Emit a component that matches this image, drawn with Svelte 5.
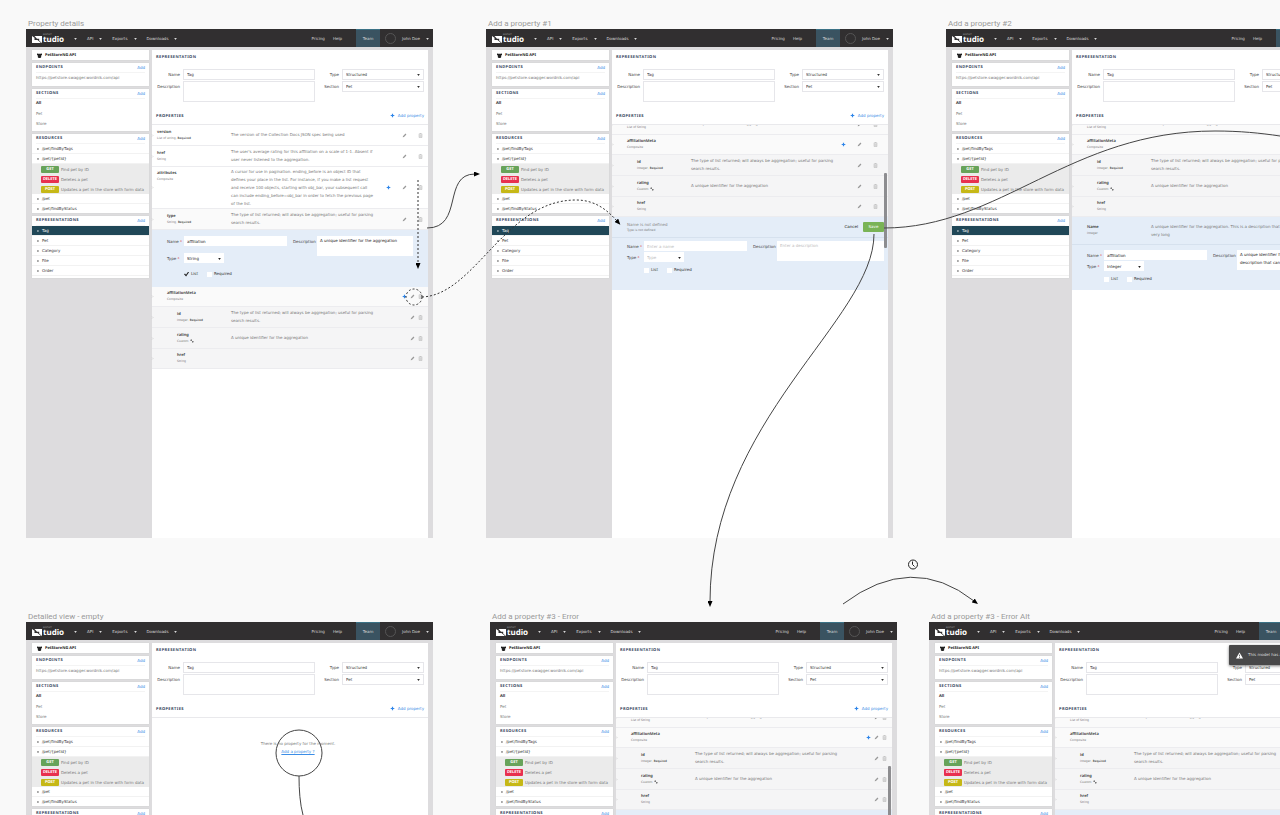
<script>
  const sections = ['All', 'Pet', 'Store'];
  const methods = [
    { verb: 'GET', text: 'Find pet by ID' },
    { verb: 'DELETE', text: 'Deletes a pet' },
    { verb: 'POST', text: 'Updates a pet in the store with form data' }
  ];
  const representations = ['Tag', 'Pet', 'Category', 'File', 'Order'];

  const listText = 'The type of list returned; will always be aggregation; useful for parsing search results.';
  const idText = 'A unique identifier for the aggregation';

  const topRows = [
    { name: 'version', type: 'List of string,', required: true, level: 0, text: 'The version of the Collection Docs JSON spec being used' },
    { name: 'href', type: 'String', level: 0, text: "The user's average rating for this affiliation on a scale of 1-1. Absent if user never listened to the aggregation." },
    { name: 'attributes', type: 'Composite', level: 0, plus: true, tall: true, text: 'A cursor for use in pagination. ending_before is an object ID that defines your place in the list. For instance, if you make a list request and receive 100 objects, starting with obj_bar, your subsequent call can include ending_before=obj_bar in order to fetch the previous page of the list.' },
    { name: 'type', type: 'String,', required: true, level: 1, shade: 1, text: listText }
  ];
  const metaRows = [
    { name: 'affiliationMeta', type: 'Composite', level: 1, shade: 1, plus: true, group: true },
    { name: 'id', type: 'Integer,', required: true, level: 2, shade: 2, text: listText },
    { name: 'rating', type: 'Custom', linked: true, level: 2, shade: 2, text: idText },
    { name: 'href', type: 'String', level: 2, shade: 2, group: true }
  ];
  const cutRow = { type: 'List of String', level: 1, shade: 1, text: idText };

  const boards = [
    { title: 'Property details', x: 26, y: 18, kind: 'details' },
    { title: 'Add a property #1', x: 486, y: 18, kind: 'new' },
    { title: 'Add a property #2', x: 946, y: 18, kind: 'filled' },
    { title: 'Detailed view - empty', x: 26, y: 611, kind: 'empty' },
    { title: 'Add a property #3 - Error', x: 490, y: 611, kind: 'error' },
    { title: 'Add a property #3 - Error Alt', x: 929, y: 611, kind: 'alert' }
  ];
</script>

{#snippet caret()}
  <svg class="caret" viewBox="0 0 4 3" aria-hidden="true"><path d="M0 0h4L2 3z" /></svg>
{/snippet}

{#snippet arrow(open)}
  <svg class="arrow" class:open viewBox="0 0 4 4" aria-hidden="true"><path d="M1 0l3 2-3 2z" /></svg>
{/snippet}

{#snippet plusIcon()}
  <svg class="ic plus" viewBox="0 0 5 5" aria-hidden="true"><path d="M2.5 0.7v3.6M0.7 2.5h3.6" /></svg>
{/snippet}

{#snippet head(title)}
  <div class="card-head"><h3>{title}</h3><a href="#add">Add</a></div>
{/snippet}

{#snippet row(r, tools)}
  <li class="row shade{r.shade ?? 0} level{r.level}" class:tall={r.tall} class:group={r.group} class:partial={!r.name}>
    <svg class="grip" viewBox="0 0 2 4" aria-hidden="true"><path d="M0 0l2 2-2 2" /></svg>
    <div class="id">
      {#if r.name}<strong>{r.name}</strong>{/if}
      <small>
        {r.type}
        {#if r.required}<b>Required</b>{/if}
        {#if r.linked}<svg class="link" viewBox="0 0 5 5" aria-hidden="true"><path d="M1 1l3 3M0.5 2l1.5-1.5M3 4.5L4.5 3" /></svg>{/if}
      </small>
    </div>
    <p>{r.text ?? ''}</p>
    <div class="tools {tools}">
      {#if r.plus}<button aria-label="Add child">{@render plusIcon()}</button>{/if}
      <button aria-label="Edit">
        <svg class="ic" viewBox="0 0 5 5" aria-hidden="true"><path class="pencil" d="M0.7 4.3l0.4-1.4L3.5 0.6l0.9 0.9L2 3.9z" /></svg>
      </button>
      <button aria-label="Delete">
        <svg class="ic" viewBox="0 0 5 5" aria-hidden="true"><path class="bin" d="M0.7 1.2h3.6M1.8 1V0.5h1.4V1M1.1 1.5v3h2.8v-3M2 2v2M3 2v2" /></svg>
      </button>
    </div>
  </li>
{/snippet}

{#snippet form(kind, value, type, text)}
  <div class="edit {kind}">
    <div class="fields">
      <label class="field"><span>Name <i>*</i></span><input type="text" {value} placeholder="Enter a name" /></label>
      <label class="field type">
        <span>Type <i>*</i></span>
        <span class="pick"><select class:ghost={type === 'Type'}><option>{type}</option></select>{@render caret()}</span>
      </label>
      <div class="checks">
        <label><input type="checkbox" checked={kind === 'details'} />List</label>
        <label><input type="checkbox" />Required</label>
      </div>
    </div>
    <label class="about"><span>Description</span><textarea value={text} placeholder="Enter a description"></textarea></label>
  </div>
{/snippet}

<main class="canvas">
  {#each boards as b}
    <figure class="board" style:left="{b.x}px" style:top="{b.y}px">
      <figcaption>{b.title}</figcaption>
      <div class="window">
        <header>
          <div class="logo">
            <svg viewBox="0 0 10 7" aria-hidden="true">
              <path d="M0 0l2.500 1.800v2.200H5.500L9 7H0zM2.500 0H10v7L7.200 4.800V2.800H5z" />
            </svg>
            <div><small>RESTLET</small><b>tudio</b></div>
          </div>
          <nav>
            <a href="#menu" aria-label="Menu">{@render caret()}</a>
            <a href="#api">API {@render caret()}</a>
            <a href="#exports">Exports {@render caret()}</a>
            <a href="#downloads">Downloads {@render caret()}</a>
          </nav>
          <nav class="help"><a href="#pricing">Pricing</a><a href="#help">Help</a></nav>
          <a class="team" href="#team">Team</a>
          <a class="user" href="#user"><span class="avatar"></span>John Doe {@render caret()}</a>
        </header>

        <div class="body">
          <aside>
            <div class="card api">
              <svg viewBox="0 0 6 6" aria-hidden="true"><path d="M0 0.500l1.500 0.500h3L6 0.500V2.500L5 3v2L4 6H2L1 5V3L0 2.500z" /></svg>
              <b>PetStoreNG API</b>
            </div>
            <div class="card endpoints">
              {@render head('ENDPOINTS')}
              <p>https://petstore.swagger.wordnik.com/api</p>
            </div>
            <div class="card sections">
              {@render head('SECTIONS')}
              <ul>{#each sections as s, i}<li class:current={i === 0}>{s}</li>{/each}</ul>
            </div>
            <div class="card resources">
              {@render head('RESOURCES')}
              <ul class="tree">
                <li>{@render arrow(false)}/pet/findByTags</li>
                <li>{@render arrow(true)}/pet/&#123;petId&#125;</li>
              </ul>
              <ul class="methods">
                {#each methods as m}<li><span class="verb {m.verb.toLowerCase()}">{m.verb}</span>{m.text}</li>{/each}
              </ul>
              <ul class="tree">
                <li>{@render arrow(false)}/pet</li>
                <li>{@render arrow(false)}/pet/findByStatus</li>
              </ul>
            </div>
            <div class="card reps">
              {@render head('REPRESENTATIONS')}
              <ul class="tree">
                {#each representations as r, i}<li class:selected={i === 0}>{@render arrow(false)}{r}</li>{/each}
              </ul>
            </div>
          </aside>

          <section class="content">
            <h3>REPRESENTATION</h3>
            <div class="summary">
              <div class="left">
                <label><span>Name</span><input type="text" value="Tag" /></label>
                <label><span>Description</span><textarea></textarea></label>
              </div>
              <div class="right">
                <label><span>Type</span><span class="pick"><select><option>Structured</option></select>{@render caret()}</span></label>
                <label><span>Section</span><span class="pick"><select><option>Pet</option></select>{@render caret()}</span></label>
              </div>
            </div>
            <div class="props-head">
              <h3>PROPERTIES</h3>
              <button>{@render plusIcon()} Add property</button>
            </div>

            {#if b.kind === 'empty'}
              <div class="empty">
                <p>There is no property for the moment.</p>
                <a href="#new">Add a property ?</a>
              </div>
            {:else if b.kind === 'details'}
              <ul class="rows">
                {#each topRows as r}{@render row(r, 'wide')}{/each}
                <li class="panel">{@render form('details', 'affiliation', 'String', idText)}</li>
                {#each metaRows as r}{@render row(r, 'tight')}{/each}
              </ul>
            {:else}
              {@const tools = b.kind === 'error' ? 'tight' : 'inset'}
              <div class="scroller">
                <ul class="rows">
                  {@render row(cutRow, tools)}
                  {#each metaRows as r}{@render row(r, tools)}{/each}
                  <li class="panel">
                    {#if b.kind === 'filled'}
                      <div class="panel-head filled">
                        <div class="id"><strong>Name</strong><small>Integer</small></div>
                        <p>A unique identifier for the aggregation. This is a description that can be very long</p>
                      </div>
                      {@render form('filled', 'affiliation', 'Integer', 'A unique identifier for the aggregation. This is a description that can be very long')}
                    {:else}
                      <div class="panel-head">
                        <div class="id undefined"><span>Name is not defined</span><small>Type is not defined</small></div>
                        <div class="actions"><button>Cancel</button><button class="save">Save</button></div>
                      </div>
                      {@render form('new', '', 'Type', '')}
                    {/if}
                  </li>
                </ul>
                {#if b.kind !== 'filled'}<span class="thumb"></span>{/if}
              </div>
            {/if}
          </section>
        </div>

        {#if b.kind === 'alert'}
          <div class="toast" role="alert">
            <svg viewBox="0 0 8 7" aria-hidden="true"><path d="M4 0l4 7H0z" fill="#fff" /><path d="M4 2.500v2M4 5.300v0.900" stroke="#444" stroke-width="0.900" /></svg>
            This model has an error
          </div>
        {/if}
      </div>
    </figure>
  {/each}

  <svg class="links" width="1280" height="815" viewBox="0 0 1280 815" aria-hidden="true">
    <defs>
      <marker id="tip" viewBox="0 0 6 5" refX="1" refY="2.500" markerWidth="6" markerHeight="5" markerUnits="userSpaceOnUse" orient="auto">
        <path d="M0 0l6 2.500L0 5z" />
      </marker>
    </defs>
    <path d="M427 228C464 228 442 174 475 174" marker-end="url(#tip)" />
    <path class="dots" d="M418 180V264" marker-end="url(#tip)" />
    <circle class="dots" cx="414" cy="297" r="8" />
    <path class="dots" d="M422 297C475 295 505 200 576 200C596 200 608 211 617 221" marker-end="url(#tip)" />
    <path d="M874 234C874 320 710 420 710 602" marker-end="url(#tip)" />
    <path d="M884 228C1000 228 1070 131 1215 131C1240 131 1260 133 1280 136" />
    <path d="M843 604Q912 552 974 601" marker-end="url(#tip)" />
    <circle cx="299" cy="753" r="23" />
    <path d="M299 776C299 790 300 804 303 815" />
    <g class="clock"><circle cx="913" cy="564.500" r="4.500" /><path d="M912.500 561.500v3l2 2" /></g>
  </svg>
</main>

<style>
  :global(body) { margin: 0; background: #f9f9f9; }
  .canvas { position: relative; height: 100vh; overflow: hidden; background: #f9f9f9; font: 4px/8px "DejaVu Sans", "Noto Sans", sans-serif; text-rendering: geometricPrecision; color: #444; }
  .canvas :is(p, ul, h3, figure) { margin: 0; padding: 0; }
  .canvas ul { list-style: none; }
  .canvas a { color: #3b8de6; text-decoration: none; }
  .canvas :is(button, input, select, textarea) { box-sizing: border-box; margin: 0; padding: 0; border: 0; border-radius: 0; background: none; font: inherit; text-rendering: inherit; color: inherit; }
  svg { display: block; flex: none; overflow: visible; }
  h3, b, strong, .current, .verb { font-family: "Noto Sans", sans-serif; }
  h3 { font-size: 4px; font-weight: 700; letter-spacing: 0.1em; color: #34435c; }

  .board { position: absolute; width: 407px; margin: 0; }
  figcaption { padding-top: 1px; margin: 0 0 0 2px; font: 8px/10px Roboto, sans-serif; text-rendering: auto; color: #999; }
  .window { position: relative; display: flex; flex-direction: column; min-height: 509px; overflow: hidden; background: #dddcde; }

  header { display: flex; align-items: center; box-sizing: border-box; height: 18px; padding: 1px 4px 0 6px; background: #312f30; color: #d8d8d8; }
  header a { display: flex; align-items: center; gap: 6px; color: #d8d8d8 !important; }
  .logo { display: flex; align-items: flex-end; gap: 1px; width: 42px; color: #fff; }
  .logo svg { width: 10px; height: 7px; fill: #fff; }
  .logo div { display: flex; flex-direction: column; }
  .logo small { font-size: 2px; line-height: 2px; color: #aaa; }
  .logo b { font-size: 8px; line-height: 7px; }
  nav { display: flex; gap: 10px; }
  .caret { width: 3px; height: 2px; fill: currentColor; }
  .help { gap: 8px; margin-left: auto; margin-right: 14px; }
  .team { align-self: stretch; justify-content: center; width: 24px; margin-top: -1px; box-sizing: border-box; border-top: 1px solid #3b7286; background: #3a5361; }
  .user { margin-left: 5px; }
  .avatar { width: 9px; height: 9px; border: 1px solid #555; border-radius: 50%; }

  .body { display: flex; flex: 1; gap: 3px; padding: 3px 5px 0 6px; }
  aside { display: flex; flex-direction: column; gap: 3px; width: 117px; }
  .card { box-sizing: border-box; background: #fff; box-shadow: 0 0 1px #c8c8c8; }
  .api { display: flex; align-items: center; gap: 3px; height: 10px; padding: 1px 5px 0; color: #222; }
  .api svg { width: 5px; height: 5px; fill: #222; }
  .card-head { display: flex; justify-content: space-between; align-items: center; box-sizing: border-box; height: 10px; margin: 0 4px; padding-top: 1px; border-bottom: 1px solid #f4f4f4; }
  .card-head a { font-size: 4px; }
  .endpoints { height: 23px; }
  .endpoints p { padding: 1px 4px 0; color: #777; }
  .sections { height: 42px; }
  .sections li { height: 10px; line-height: 10px; padding: 0 4px; color: #777; }
  .sections .current { color: #222; font-weight: 700; }
  .resources { height: 79px; overflow: hidden; }
  .tree li { display: flex; align-items: center; gap: 1px; box-sizing: border-box; height: 10px; padding: 1px 5px 0; border-bottom: 1px solid #f2f2f2; color: #333; }
  .arrow { width: 2px; height: 2px; margin-right: 2px; fill: #333; }
  .arrow.open { transform: rotate(90deg); }
  .methods { background: #ebebeb; padding-bottom: 1px; }
  .methods li { display: flex; align-items: center; gap: 2px; height: 10px; padding: 1px 0 0 9px; box-sizing: border-box; color: #777; }
  .verb { width: 18px; height: 7px; border-radius: 1px; font-weight: 700; line-height: 8px; text-align: center; color: #fff; }
  .get { background: #67a35a; }
  .delete { background: #e8304f; }
  .post { background: #c6b816; }
  .reps { padding-bottom: 2px; }
  .reps .selected { background: #204757; color: #fff; }
  .reps .selected svg { fill: #fff; }

  .content { position: relative; flex: 1; min-width: 0; background: #fff; }
  .content > h3 { padding: 1px 4px 0; line-height: 14px; }
  .summary { display: flex; gap: 3px; padding: 4px 4px 0; }
  .summary > div { display: flex; flex-direction: column; }
  .left { flex: 1; }
  .right { width: 106px; }
  .summary label { display: flex; gap: 3px; line-height: 12px; }
  .summary label > span:first-child { width: 24px; text-align: right; }
  .summary .right label > span:first-child { width: 21px; }
  .summary :is(input, textarea, .pick) { flex: 1; min-width: 0; height: 11px; border: 1px solid #e6e6ea; padding: 1px 3px 0; background: #fff; color: #333; }
  .summary .left textarea { height: 21px; }
  textarea { resize: none; overflow: hidden; }
  .pick { display: flex; align-items: center; box-sizing: border-box; background: #fff; color: #333; }
  .pick select { flex: 1; min-width: 0; appearance: none; }
  .props-head { display: flex; justify-content: space-between; height: 15px; margin-top: 7px; padding: 0 4px; border-bottom: 1px solid #e9e9ec; line-height: 16px; }
  .props-head button { display: flex; align-items: center; gap: 3px; height: 13px; color: #3b8de6; }

  .row { display: grid; grid-template-columns: 5px 74px 144px 1fr; align-items: center; box-sizing: border-box; height: 21px; border-bottom: 1px solid #ececef; background: #fff; }
  .row.group { height: 20px; }
  .row.tall { height: 42px; }
  .row.tall .id { align-self: start; padding-top: 4px; }
  .row.partial { margin-top: -11px; }
  .row.partial .id { align-self: end; padding-bottom: 4px; }
  .grip { width: 1px; height: 3px; fill: none; stroke: #bbb; stroke-width: 1; }
  .row.shade1 { background: #fafafa; }
  .row.shade2 { background: #f5f5f6; }
  .id { display: flex; flex-direction: column; line-height: 6px; }
  .level1 .id { padding-left: 10px; }
  .level2 .id { padding-left: 20px; }
  .id strong { font-weight: 600; color: #333; }
  .id small { display: flex; align-items: center; gap: 1px; font-size: 3px; line-height: 5px; color: #777; }
  .id small b { font-weight: 600; color: #444; }
  .link { width: 4px; height: 4px; fill: none; stroke: #333; stroke-width: 0.8; }
  .row p, .panel-head p { color: #777; }
  .tools { display: flex; justify-content: flex-end; gap: 11px; padding-right: 5px; }
  .tools.tight { gap: 3px; }
  .tools.inset { padding-right: 10px; }
  .ic { width: 5px; height: 5px; }
  .plus { fill: none; stroke: #2f86ea; stroke-width: 1.2; }
  .pencil { fill: #999; }
  .bin { fill: none; stroke: #aaa; stroke-width: 0.5; }

  .scroller { position: relative; overflow: hidden; }
  .thumb { position: absolute; top: 48px; right: 1px; width: 3px; height: 75px; border-radius: 1px; background: #8d8d90; }
  .panel { background: #e4edf8; }
  .panel-head { display: flex; justify-content: space-between; align-items: center; box-sizing: border-box; height: 21px; padding: 0 4px 0 15px; border-bottom: 1px solid #d6e1ee; }
  .panel-head.filled { display: grid; grid-template-columns: 64px 144px; justify-content: start; height: 28px; }
  .undefined { color: #888; }
  .actions { display: flex; align-items: center; gap: 5px; color: #222; }
  .actions .save { width: 21px; height: 10px; border-radius: 1px; background: #79b356; color: #fff; }
  .edit { display: flex; gap: 6px; box-sizing: border-box; height: 52px; padding: 3px 4px 0 15px; color: #444; }
  .edit i { color: #d33; font-style: normal; }
  .fields { display: flex; flex-direction: column; width: 120px; }
  .field { display: flex; line-height: 11px; }
  .field > span:first-child { width: 17px; }
  .edit :is(input[type="text"], textarea, .pick) { padding: 1px 3px 0; background: #fff; color: #222; }
  .edit input[type="text"] { flex: 1; min-width: 0; height: 10px; }
  .edit .pick { width: 40px; height: 10px; }
  .edit :is(input, textarea)::placeholder { color: #bbb; }
  .edit select.ghost { color: #bbb; }
  .checks { display: flex; gap: 9px; padding: 3px 0 0 17px; }
  .checks label { display: flex; align-items: center; gap: 2px; color: #333; }
  .checks input { appearance: none; width: 5px; height: 5px; background: #fff; }
  .checks input:checked { clip-path: polygon(0 55%, 20% 40%, 40% 65%, 85% 0, 100% 15%, 42% 100%); background: #222; }
  .about { display: flex; flex: 1; min-width: 0; gap: 1px; line-height: 11px; }
  .about span { width: 23px; }
  .about textarea { flex: 1; min-width: 0; height: 20px; line-height: 8px; }
  .edit.details { height: 57px; padding: 6px 15px 0 15px; }
  .details .fields { gap: 6px; }
  .details .checks { padding-top: 0; }
  .edit.filled { height: 45px; padding-top: 5px; }

  .empty { display: flex; flex-direction: column; align-items: center; padding: 22px 0 0 16px; color: #777; }
  .empty a { text-decoration: underline; }

  .toast { position: absolute; top: 23px; left: 300px; display: flex; align-items: center; gap: 5px; width: 100px; height: 20px; padding-left: 7px; border-radius: 1px; background: #484849; box-shadow: 0 1px 3px #0008; color: #ddd; }
  .toast svg { width: 7px; height: 7px; }

  .links { position: absolute; top: 0; left: 0; fill: none; stroke: #444; stroke-width: 1; pointer-events: none; }
  .links marker path { fill: #000; stroke: none; }
  .dots { stroke: #333; stroke-dasharray: 2 2; }
  .clock { stroke: #222; }
</style>
